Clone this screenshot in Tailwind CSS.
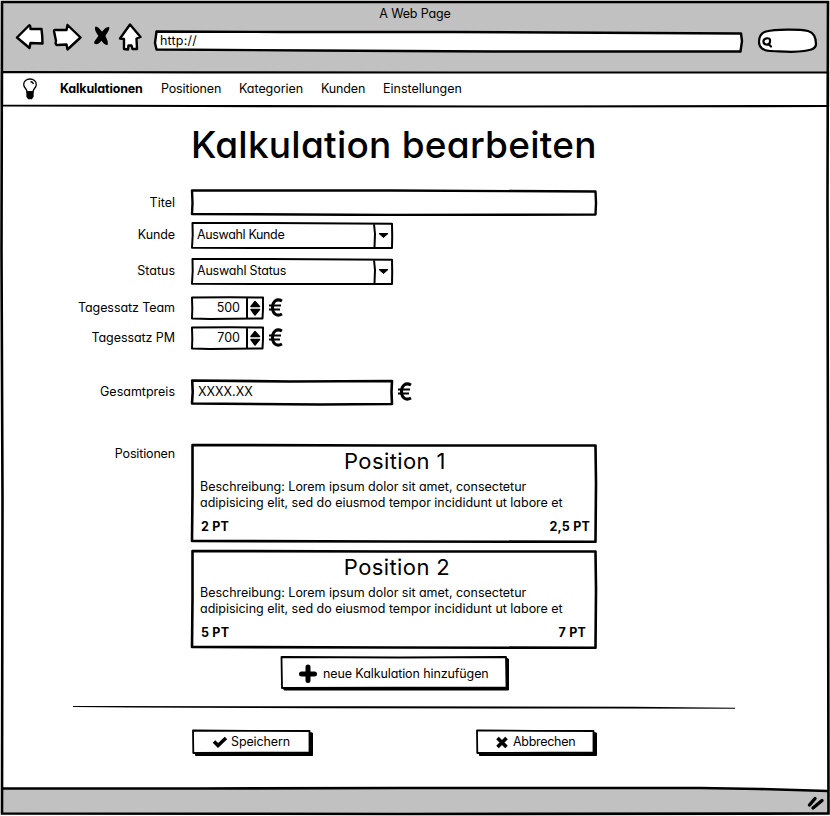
<!DOCTYPE html>
<html lang="de">
<head>
<meta charset="utf-8">
<title>Kalkulation bearbeiten</title>
<script src="https://cdn.jsdelivr.net/npm/@tailwindcss/browser@4"></script>
</head>
<body class="bg-white">
<div class="relative flex h-[816px] w-[830px] flex-col overflow-hidden bg-white font-['Inter','Noto_Sans',sans-serif] text-[12.5px] leading-4 text-black [font-feature-settings:'cv11']">

  <header class="flex h-[72px] flex-col bg-[#c1c1c1] pt-[6px]">
    <div class="text-center tracking-[-0.15px]">A Web Page</div>
    <div class="-mt-px flex items-start pl-[14px]">
      <svg class="h-[30px] w-[130px]" viewBox="14 21 130 30" fill="#fff" stroke="#000" stroke-width="2.4" stroke-linejoin="round" stroke-linecap="round">
        <path d="M17 37.500L29 25.500Q30.500 24.500 30.500 29L41.500 29Q42.500 36 42.500 43.500L30.500 43L29.500 48Z"/>
        <path d="M54 31Q54 29.500 57 30L66.500 30L67.500 25L80.500 37.500L67.500 49.500L66.500 44.500L57 45Q55 44.500 56 41Z"/>
        <path d="M130 24.500L140.500 37L136.500 38.500L137 49L132.500 49L131.500 45.500L128.500 45.500L128 49.500L124 49L124 39L120 38.500Z"/>
        <path d="M96 27.500C99 28 100 31 102 33C104 31 105.500 27.500 108.500 28C109 30 105.500 33 104.500 36C105.500 39 107.500 41 107 44C104.500 44.500 103.500 41 101.500 39.500C99.500 41 98 44.500 95 43C95.500 40 98.500 38 99.500 36C98 33 95 31 96 27.500Z" fill="#000" stroke-width="1.800"/>
      </svg>
      <div class="relative ml-[9px] mt-[9px] flex h-6 w-[592px] items-start pl-[7px] pt-[3px]">
        <svg class="absolute inset-0 h-6 w-[592px]" viewBox="0 0 592 24" fill="#fff" stroke="#000" stroke-width="2.4" stroke-linejoin="round"><path d="M3.500 1.500L130 2L300 2L588 3.500L589 11L587.500 21.500L340 21.500L160 20.500L3.500 19.500L2 13Z"/></svg>
        <span class="relative tracking-[0.2px]">http://</span>
      </div>
      <svg class="ml-[11px] mt-[7px] h-[26px] w-[62px]" viewBox="756 28 62 26" fill="#fff" stroke="#000" stroke-width="2.200" stroke-linecap="round"><path d="M766 31.500C775 29 800 29 808 31C815 33 816 39 816 44C816 49 811 50 804 51C792 53 778 51 770 51C763 51 759 47 759 42C759 37 761 33 766 31.500Z"/><path d="M770 39.500C769 37.500 764 38 763.500 41C763 45 769 46 770 42ZM768.500 44L771 46.500"/></svg>
    </div>
  </header>

  <nav class="flex h-[35px] items-start pt-[9px]">
    <svg class="-mt-[3px] ml-[22px] h-[22px] w-4" viewBox="0 0 16 22" fill="none" stroke="#000" stroke-width="1.300"><path d="M5 14C5 10.500 1.700 10 1.700 6.500C1.700 3 4.500 1 8 1C11.500 1 14.300 3 14.300 6.500C14.300 10 11 10.500 11 14Z"/><path d="M8.500 3.500Q11 4 11.500 6"/><path d="M5 14H11V18.500L9.500 20.500H6.500L5 18.500Z" fill="#000"/></svg>
    <a class="ml-[22px] w-[101px] font-bold tracking-[-0.15px]">Kalkulationen</a>
    <a class="w-[78px] tracking-[-0.15px]">Positionen</a>
    <a class="w-[82px] tracking-[-0.05px]">Kategorien</a>
    <a class="w-[62px] tracking-[-0.15px]">Kunden</a>
    <a>Einstellungen</a>
  </nav>

  <main class="flex h-[681px] flex-col">
    <h1 class="mt-[14px] ml-[191px] h-[48px] whitespace-nowrap text-[37px] font-medium leading-[48px] tracking-[0.25px]">Kalkulation bearbeiten</h1>

    <div class="mt-5 flex h-[27px] items-center">
      <label class="w-[175px] text-right">Titel</label>
      <svg class="ml-[15px] h-[27px] w-[408px]" viewBox="0 0 408 27" fill="#fff" stroke="#000" stroke-width="2.400" stroke-linejoin="round"><path d="M2 1.500L200 1.500L405.500 2.500L406 14L405.500 25.500L200 26L2 25L2.500 14Z"/></svg>
    </div>

    <div class="mt-[5px] flex h-[29px] items-start pt-[6px]">
      <label class="w-[175px] text-right tracking-[-0.1px]">Kunde</label>
      <div class="relative -mt-[6px] ml-[15px] flex h-[29px] w-[204px] pt-[6px] pl-[7px]">
        <svg class="absolute inset-0 h-[29px] w-[204px]" viewBox="0 0 204 29" fill="none" stroke="#000" stroke-width="2" stroke-linejoin="round"><path d="M2.500 2L80 2L202 2.800L202.200 15L202 27L90 27L2 26.700L2.700 14ZM184 3L185 13L184.500 26"/><path d="M189 12.500H198L193.500 16.500Z" fill="#000" stroke-width="1"/></svg>
        <span class="relative tracking-[-0.35px]">Auswahl Kunde</span>
      </div>
    </div>

    <div class="mt-[7px] flex h-[29px] items-start pt-[6px]">
      <label class="w-[175px] text-right">Status</label>
      <div class="relative -mt-[6px] ml-[15px] flex h-[29px] w-[204px] pt-[6px] pl-[7px]">
        <svg class="absolute inset-0 h-[29px] w-[204px]" viewBox="0 0 204 29" fill="none" stroke="#000" stroke-width="2" stroke-linejoin="round"><path d="M2.500 2L80 2L202 2.800L202.200 15L202 27L90 27L2 26.700L2.700 14ZM184 3L185 13L184.500 26"/><path d="M189 12.500H198L193.500 16.500Z" fill="#000" stroke-width="1"/></svg>
        <span class="relative tracking-[-0.2px]">Auswahl Status</span>
      </div>
    </div>

    <div class="mt-[9px] flex h-[26px] items-start pt-[5px]">
      <label class="w-[175px] text-right tracking-[-0.07px]">Tagessatz Team</label>
      <div class="relative -mt-[5px] ml-[15px] h-[26px] w-[75px] pt-[5px] pr-[25px] text-right">
        <svg class="absolute inset-0 h-[26px] w-[75px]" viewBox="0 0 75 26" fill="none" stroke="#000" stroke-width="2" stroke-linejoin="round"><path d="M2 2.500L40 2.200L73 2.500L73 14L72.500 23.500L20 24L2 23.500L2.300 14ZM57 3V24"/><path d="M61 11.500H69.500L65 6.500ZM61 14.500H69.500L65 20Z" fill="#000" stroke-width="1.500"/></svg>
        <span class="relative">500</span>
      </div>
      <svg class="ml-[3px] -mt-[3px] h-[21px] w-[17px]" viewBox="0 0 17 21" fill="none" stroke="#000"><path d="M14 4C8.500 1 4.500 4.500 4.500 10.500C4.500 16.500 8.500 20 14 17" stroke-width="3"/><path d="M1 8.500H13M1 12.500H12" stroke-width="2.200"/></svg>
    </div>

    <div class="mt-1 flex h-[26px] items-start pt-[5px]">
      <label class="w-[175px] text-right tracking-[-0.07px]">Tagessatz PM</label>
      <div class="relative -mt-[5px] ml-[15px] h-[26px] w-[75px] pt-[5px] pr-[25px] text-right">
        <svg class="absolute inset-0 h-[26px] w-[75px]" viewBox="0 0 75 26" fill="none" stroke="#000" stroke-width="2" stroke-linejoin="round"><path d="M2 2.500L40 2.200L73 2.500L73 14L72.500 23.500L20 24L2 23.500L2.300 14ZM57 3V24"/><path d="M61 11.500H69.500L65 6.500ZM61 14.500H69.500L65 20Z" fill="#000" stroke-width="1.500"/></svg>
        <span class="relative">700</span>
      </div>
      <svg class="ml-[3px] -mt-[3px] h-[21px] w-[17px]" viewBox="0 0 17 21" fill="none" stroke="#000"><path d="M14 4C8.500 1 4.500 4.500 4.500 10.500C4.500 16.500 8.500 20 14 17" stroke-width="3"/><path d="M1 8.500H13M1 12.500H12" stroke-width="2.200"/></svg>
    </div>

    <div class="mt-[27px] flex h-[28px] items-start pt-[6px]">
      <label class="w-[175px] text-right">Gesamtpreis</label>
      <div class="relative -mt-[6px] ml-[15px] h-[28px] w-[204px] pt-[6px] pl-2">
        <svg class="absolute inset-0 h-[28px] w-[204px]" viewBox="0 0 204 28" fill="none" stroke="#000" stroke-width="2.600" stroke-linejoin="round"><path d="M2.200 2.500L100 3.500L202 3L201.500 14L202 26L130 26.500L2 25.500L2.700 14Z"/></svg>
        <span class="relative">XXXX.XX</span>
      </div>
      <svg class="ml-[3px] -mt-[3px] h-[21px] w-[17px]" viewBox="0 0 17 21" fill="none" stroke="#000"><path d="M14 4C8.500 1 4.500 4.500 4.500 10.500C4.500 16.500 8.500 20 14 17" stroke-width="3"/><path d="M1 8.500H13M1 12.500H12" stroke-width="2.200"/></svg>
    </div>

    <div class="mt-[37px] flex items-start">
      <label class="w-[175px] pt-[3px] text-right tracking-[-0.15px]">Positionen</label>
      <div class="ml-[15px] flex w-[408px] flex-col gap-[6px]">
        <article class="relative h-[100px] pl-[10px]">
          <svg class="absolute inset-0 h-[100px] w-[408px]" viewBox="0 0 408 100" fill="none" stroke="#000" stroke-width="2.600" stroke-linejoin="round"><path d="M2.500 2L200 2.500L405.500 2.500L406 40L405.500 98.800L200 98.500L2 98L2.500 50Z"/></svg>
          <h2 class="relative -ml-[10px] pt-[4px] pl-[2px] text-center text-[22px] leading-7 tracking-[0.4px]">Position 1</h2>
          <p class="relative mt-[4px] w-[390px] tracking-[-0.02px]">Beschreibung: Lorem ipsum dolor sit amet, consectetur<br>adipisicing elit, sed do eiusmod tempor incididunt ut labore et</p>
          <div class="relative mt-[8px] flex justify-between pr-[8px] pl-[1px] font-bold tracking-[0.2px]"><span>2 PT</span><span>2,5 PT</span></div>
        </article>
        <article class="relative h-[100px] pl-[10px]">
          <svg class="absolute inset-0 h-[100px] w-[408px]" viewBox="0 0 408 100" fill="none" stroke="#000" stroke-width="2.600" stroke-linejoin="round"><path d="M2.500 2L200 2.500L405.500 2.500L406 40L405.500 98.800L200 98.500L2 98L2.500 50Z"/></svg>
          <h2 class="relative -ml-[10px] pt-[4px] pl-[6px] text-center text-[22px] leading-7 tracking-[0.4px]">Position 2</h2>
          <p class="relative mt-[4px] w-[390px] tracking-[-0.02px]">Beschreibung: Lorem ipsum dolor sit amet, consectetur<br>adipisicing elit, sed do eiusmod tempor incididunt ut labore et</p>
          <div class="relative mt-[8px] flex justify-between pr-[12px] pl-[1px] font-bold tracking-[0.2px]"><span>5 PT</span><span>7 PT</span></div>
        </article>
      </div>
    </div>

    <button class="relative mt-[6px] ml-[280px] flex h-[36px] w-[230px] items-start pt-[11px] pl-[18px]">
      <svg class="absolute inset-0 h-[36px] w-[230px]" viewBox="0 0 230 36"><path d="M4 33L225 31.500V3L228.500 4V35L4 35Z" stroke="#000" stroke-width="1"/><path d="M1.500 2L120 2.500L226 2L226.500 32.500L2 33Z" fill="#fff" stroke="#000" stroke-width="1.800" stroke-linejoin="round"/></svg>
      <svg class="relative -mt-[2px] h-5 w-5" viewBox="0 0 20 20" stroke="#000" stroke-width="5" stroke-linecap="round"><path d="M10 3V16.500M3.500 10H16.500"/></svg>
      <span class="relative ml-[5px] whitespace-nowrap tracking-[-0.1px]">neue Kalkulation hinzufügen</span>
    </button>

    <svg class="mt-[13px] ml-[73px] h-[6px] w-[662px] shrink-0" viewBox="0 0 662 6" fill="#000"><path d="M0 2L30 2L300 2.300L560 2.800L662 3.800V4.800L540 4.500L250 4.300L60 3.400L0 2.900Z"/></svg>

    <div class="mt-[19px] ml-[191px] flex justify-between w-[407px]">
      <button class="relative flex h-[28px] w-[123px] items-start pt-[5px] pl-[21px]">
        <svg class="absolute inset-0 h-[28px] w-[123px]" viewBox="0 0 123 28"><path d="M4.500 25L118 24V3.500L121.500 4V26.500L4.500 26.500Z" stroke="#000"/><path d="M2 1.500L60 1.800L118.500 2L118.500 23.500L2.300 24Z" fill="#fff" stroke="#000" stroke-width="1.800" stroke-linejoin="round"/></svg>
        <svg class="relative mt-[1px] h-[14px] w-[16px]" viewBox="0 0 16 14" fill="none" stroke="#000" stroke-width="3.600"><path d="M2 6.500L6 10.500L14 3"/></svg>
        <span class="relative ml-[3px] tracking-[-0.12px]">Speichern</span>
      </button>
      <button class="relative flex h-[28px] w-[123px] items-start pt-[5px] pl-[21px]">
        <svg class="absolute inset-0 h-[28px] w-[123px]" viewBox="0 0 123 28"><path d="M4.500 25L118 24V3.500L121.500 4V26.500L4.500 26.500Z" stroke="#000"/><path d="M2 1.500L60 1.800L118.500 2L118.500 23.500L2.300 24Z" fill="#fff" stroke="#000" stroke-width="1.800" stroke-linejoin="round"/></svg>
        <svg class="relative mt-[1px] h-[14px] w-[12px]" viewBox="0 0 12 14" fill="none" stroke="#000" stroke-width="3.600"><path d="M1.500 3L10.500 12M10.500 3L1.500 12"/></svg>
        <span class="relative ml-[5px] tracking-[-0.3px]">Abbrechen</span>
      </button>
    </div>
  </main>

  <footer class="flex h-[28px] items-center justify-end bg-[#c1c1c1] pr-[5px]">
    <svg class="mt-[2px] h-[16px] w-[18px]" viewBox="0 0 18 16" stroke="#000" stroke-width="3.400" stroke-linecap="round"><path d="M2.500 10L8 3.500M6 13L15 5.500"/></svg>
  </footer>

  <!-- hand-drawn window outline and bar dividers -->
  <svg class="pointer-events-none absolute inset-0 h-[816px] w-[830px]" viewBox="0 0 830 816" fill="none" stroke="#000" stroke-width="2.600">
    <path d="M0 0H830V816H0ZM2 2V814H828V2Z" fill="#fff" fill-rule="evenodd" stroke="none"/>
    <path d="M800 783L828 785V791L740 788Z" fill="#fff" stroke="none"/>
    <path d="M2 2H828L827.500 200L828 500L828.500 813.500L400 814L2 813.500L2.500 500L1.500 250Z"/>
    <path d="M2 72L200 72.300L450 72.500L828 72.500V106L500 106.500L200 106L2 105.500Z" stroke-width="2.200"/>
    <path d="M2 788.500L200 788.500L400 788L700 788L760 789L828 791"/>
  </svg>
</div>
</body>
</html>
